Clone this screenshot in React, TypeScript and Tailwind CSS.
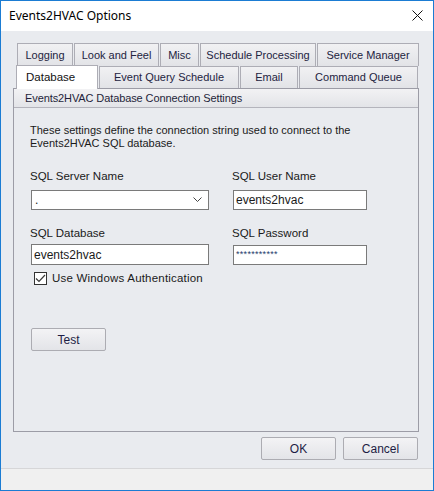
import React from 'react';

const tabRow1 = [
  { label: 'Logging', w: 'w-[56px]' },
  { label: 'Look and Feel', w: 'w-[85px]' },
  { label: 'Misc', w: 'w-[39px]' },
  { label: 'Schedule Processing', w: 'w-[116px]' },
  { label: 'Service Manager', w: 'w-[102px]' },
];

const tabRow2 = [
  { label: 'Event Query Schedule', w: 'w-[140px]' },
  { label: 'Email', w: 'w-[58px]' },
  { label: 'Command Queue', w: 'w-[119px]' },
];

function Tab({ label, w }: { label: string; w: string }) {
  return (
    <div
      className={`${w} h-full flex items-center justify-center border border-[#adadb5] border-b-0 bg-gradient-to-b from-[#f1f1f3] to-[#e2e3e7] text-[#23233f] text-[11px] leading-none`}
    >
      {label}
    </div>
  );
}

function WinButton({ children, className = '' }: { children: React.ReactNode; className?: string }) {
  return (
    <button
      className={`w-[75px] h-[23px] flex items-center justify-center rounded-[2px] border border-[#acacb2] bg-gradient-to-b from-[#f3f3f5] to-[#e3e4e8] text-[12px] text-[#1d1d44] ${className}`}
    >
      {children}
    </button>
  );
}

export default function App() {
  return (
    <div
      className="w-[434px] h-[491px] border border-[#1b7cd3] bg-[#e9ebef] flex flex-col overflow-hidden"
      style={{ fontFamily: '"Liberation Sans", Arial, sans-serif' }}
    >
      {/* Title bar */}
      <div className="h-[30px] bg-white flex items-center justify-between pl-[8px] pr-[10px] shrink-0">
        <span className="text-[12px] text-black" style={{ fontFamily: '"Noto Sans", sans-serif' }}>
          Events2HVAC Options
        </span>
        <svg width="11" height="11" viewBox="0 0 11 11" className="mb-[1px]">
          <path d="M0.5 0.5 L10.5 10.5 M10.5 0.5 L0.5 10.5" stroke="#111" strokeWidth="1" fill="none" />
        </svg>
      </div>

      {/* Content */}
      <div className="flex-1 pl-[12px] pt-[12px] flex flex-col">
        {/* Tabs */}
        <div className="pl-[4px] flex flex-col">
          <div className="h-[23px] flex gap-[1px]">
            {tabRow1.map((t) => (
              <Tab key={t.label} {...t} />
            ))}
          </div>
          <div className="h-[22px] flex gap-[1px] -ml-[1px] items-end">
            <div className="w-[82px] h-[24px] -mt-[2px] flex items-center pl-[9px] bg-white border border-[#adadb5] border-b-0 text-[11.5px] text-[#111] leading-none relative z-10 mb-[-1px]">
              Database
            </div>
            {tabRow2.map((t) => (
              <Tab key={t.label} {...t} />
            ))}
          </div>
        </div>

        {/* Panel */}
        <div className="w-[406px] h-[344px] border border-[#9c9ca6] bg-[#e9ebef] flex flex-col">
          <div className="h-[19px] flex items-center pl-[11px] border-b border-[#b4b4bc] bg-gradient-to-b from-[#f2f2f4] to-[#e3e4e8] text-[11px] tracking-[-0.1px] text-[#1f1f3a]">
            Events2HVAC Database Connection Settings
          </div>
          <div className="pl-[16px] pt-[16px] flex flex-col text-[11px] text-[#1a1a1a]">
            <p className="leading-[13px] w-[340px]">
              These settings define the connection string used to connect to the Events2HVAC SQL database.
            </p>

            <div className="mt-[19px] flex">
              <div className="w-[202px] flex flex-col">
                <span className="h-[14px] leading-[14px] text-[11.5px]">SQL Server Name</span>
                <div className="mt-[7px] ml-[1px] w-[178px] h-[20px] bg-white border border-[#7a7a7a] flex items-center justify-between pl-[3px] pr-[6px]">
                  <span className="text-[12px] leading-none">.</span>
                  <svg width="9" height="6" viewBox="0 0 9 6">
                    <path d="M0.5 0.5 L4.5 4.5 L8.5 0.5" stroke="#444" strokeWidth="1" fill="none" />
                  </svg>
                </div>
                <span className="mt-[16px] h-[14px] leading-[14px] text-[11.5px]">SQL Database</span>
                <div className="mt-[4px] ml-[1px] w-[178px] h-[21px] bg-white border border-[#7a7a7a] flex items-center pl-[2px] text-[12px]">
                  events2hvac
                </div>
                <label className="mt-[5px] ml-[4px] flex items-center gap-[5px]">
                  <span className="w-[13px] h-[13px] bg-white border border-[#333] flex items-center justify-center">
                    <svg width="11" height="9" viewBox="0 0 11 9">
                      <path d="M1 4.5 L4 7.5 L10 1" stroke="#3a3a3a" strokeWidth="1.2" fill="none" />
                    </svg>
                  </span>
                  <span className="text-[11.5px] tracking-[0.2px]">Use Windows Authentication</span>
                </label>
              </div>
              <div className="flex flex-col">
                <span className="h-[14px] leading-[14px] text-[11.5px]">SQL User Name</span>
                <div className="mt-[7px] ml-[1px] w-[134px] h-[20px] bg-white border border-[#7a7a7a] flex items-center pl-[2px] text-[12px]">
                  events2hvac
                </div>
                <span className="mt-[16px] h-[14px] leading-[14px] text-[11.5px]">SQL Password</span>
                <div className="mt-[5px] ml-[1px] w-[134px] h-[20px] bg-white border border-[#7a7a7a] flex items-center pl-[2px] text-[9px] text-[#1d3b6b] tracking-[0.3px]">
                  ***********
                </div>
              </div>
            </div>

            <WinButton className="mt-[41px] ml-[1px]">Test</WinButton>
          </div>
        </div>

        {/* Footer buttons */}
        <div className="flex justify-end gap-[7px] pr-[15px] mt-[5px]">
          <WinButton>OK</WinButton>
          <WinButton>Cancel</WinButton>
        </div>
      </div>

      {/* Bottom strip */}
      <div className="h-[22px] shrink-0 border-t border-[#d6d6d8] bg-[#f0f0f0]" />
    </div>
  );
}
